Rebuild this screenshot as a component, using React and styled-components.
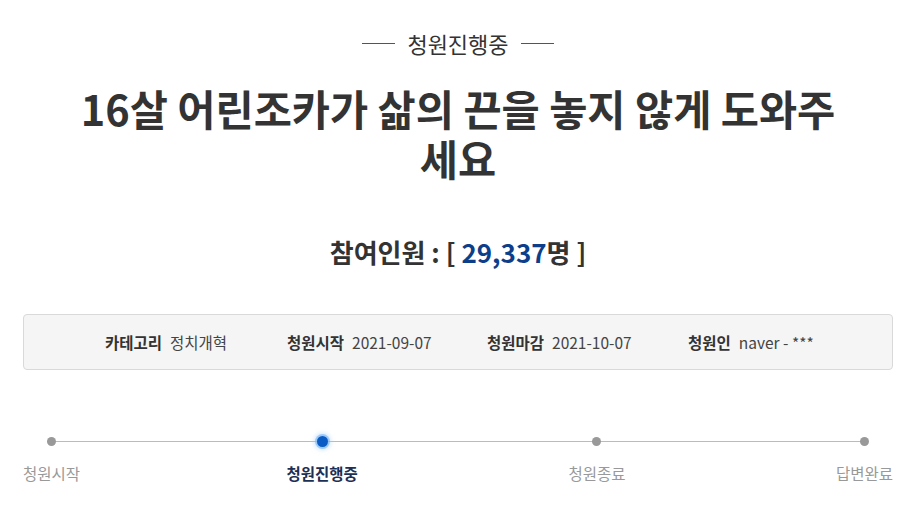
import React from 'react';
import styled, {createGlobalStyle} from 'styled-components';

const GlobalStyle = createGlobalStyle`
    body {
        margin: 0;
        background: #fff;
        font-family: "Noto Sans CJK KR", "Noto Sans", sans-serif;
        color: #333;
    }
`;

const Page = styled.div`
    width: 918px;
    padding: 28px 25px 0 23px;
    box-sizing: border-box;
`;

const Status = styled.div`
    display: flex;
    align-items: center;
    justify-content: center;
    gap: 12px;
    font-size: 22px;
    color: #333;
    line-height: 30px;

    &::before, &::after {
        content: '';
        width: 33px;
        height: 1px;
        background: #555;
    }
`;

const Title = styled.h1`
    width: 780px;
    margin: 25px auto 0;
    font-size: 41.5px;
    font-weight: 700;
    line-height: 50px;
    text-align: center;
    color: #333;
    letter-spacing: 0;
`;

const Count = styled.div`
    margin-top: 51px;
    text-align: center;
    font-size: 26px;
    font-weight: 700;
    line-height: 36px;
    color: #333;
`;

const Number = styled.span`
    color: #0d3e8a;
`;

const InfoBox = styled.div`
    margin-top: 44px;
    height: 56px;
    box-sizing: border-box;
    background: #f5f5f5;
    border: 1px solid #d9d9d9;
    border-radius: 4px;
    display: flex;
    align-items: center;
    padding-left: 81px;
`;

const InfoItem = styled.div`
    width: ${p => p.w}px;
    font-size: 15.5px;
    color: #444;
    white-space: nowrap;
`;

const Term = styled.span`
    font-weight: 700;
    color: #333;
    margin-right: 8px;
`;

const Timeline = styled.div`
    position: relative;
    margin-top: 65px;
    display: flex;
    justify-content: space-between;

    &::before {
        content: '';
        position: absolute;
        left: 28px;
        right: 29px;
        top: 6px;
        height: 1px;
        background: #bbb;
    }
`;

const Step = styled.div`
    position: relative;
    display: flex;
    flex-direction: column;
    align-items: center;
    gap: 15px;
    margin-left: ${p => p.shift || 0}px;
`;

const Dot = styled.span`
    width: ${p => (p.active ? 11 : 9)}px;
    height: ${p => (p.active ? 11 : 9)}px;
    margin: ${p => (p.active ? 1 : 2)}px 0;
    border-radius: 50%;
    background: ${p => (p.active ? '#0a5cc4' : '#999')};
    box-shadow: ${p => (p.active ? '0 0 0 2px rgba(120, 180, 245, 0.6), 0 0 4px 3px rgba(160, 205, 250, 0.5)' : 'none')};
`;

const StepLabel = styled.span`
    font-size: 15.5px;
    line-height: 20px;
    font-weight: ${p => (p.active ? 700 : 400)};
    color: ${p => (p.active ? '#1d2f55' : '#999')};
`;

const steps = [
    {label: '청원시작'},
    {label: '청원진행중', active: true, shift: -4},
    {label: '청원종료'},
    {label: '답변완료'}
];

export default function App() {
    return (
        <Page>
            <GlobalStyle />
            <Status>청원진행중</Status>
            <Title>16살 어린조카가 삶의 끈을 놓지 않게 도와주세요</Title>
            <Count>참여인원 : [ <Number>29,337</Number>명 ]</Count>
            <InfoBox>
                <InfoItem w={182}><Term>카테고리</Term>정치개혁</InfoItem>
                <InfoItem w={200}><Term>청원시작</Term>2021-09-07</InfoItem>
                <InfoItem w={201}><Term>청원마감</Term>2021-10-07</InfoItem>
                <InfoItem w={180}><Term>청원인</Term>naver - ***</InfoItem>
            </InfoBox>
            <Timeline>
                {steps.map(s => (
                    <Step key={s.label} shift={s.shift}>
                        <Dot active={s.active} />
                        <StepLabel active={s.active}>{s.label}</StepLabel>
                    </Step>
                ))}
            </Timeline>
        </Page>
    );
}
